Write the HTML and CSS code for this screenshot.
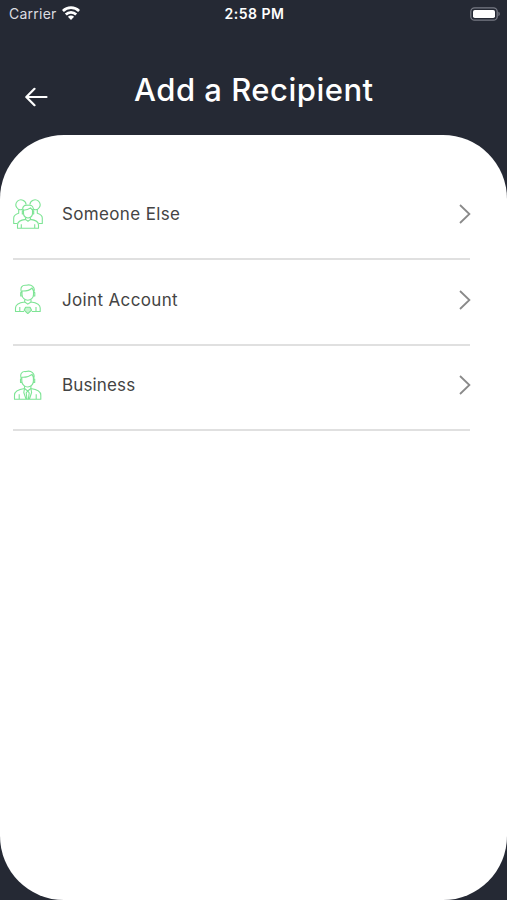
FILE: index.html
```html
<!DOCTYPE html>
<html lang="en">
<head>
    <meta charset="UTF-8">
    <meta name="viewport" content="width=device-width, initial-scale=1.0">
    <title>Add a Recipient</title>
    <link rel="stylesheet" href="styles.css">
</head>
<body>
    <div class="screen">
        <div class="status-bar">
            <div class="status-left">
                <span class="carrier">Carrier</span>
                <svg class="wifi" width="18" height="14" viewBox="0 0 18 14" fill="none" stroke="#fff" stroke-width="2.7">
                    <path d="M0.9 5C5.4 0.5 12.6 0.5 17.1 5"/>
                    <path d="M3.8 8.5C6.7 5.6 11.3 5.6 14.2 8.5"/>
                    <path d="M9 14L5.9 10.8C7.6 9.2 10.4 9.2 12.1 10.8Z" fill="#fff" stroke="none"/>
                </svg>
            </div>
            <span class="time">2:58 PM</span>
            <div class="status-right">
                <svg width="30" height="14" viewBox="0 0 30 14">
                    <rect x="0.8" y="0.8" width="26.4" height="12.4" rx="3.8" fill="none" stroke="#777a84" stroke-width="1.3"/>
                    <rect x="3" y="3" width="22" height="8" rx="1.8" fill="#fff"/>
                    <path d="M28.4 4.8C30.2 5.4 30.2 8.6 28.4 9.2Z" fill="#777a84"/>
                </svg>
            </div>
        </div>

        <header class="header">
            <svg class="back" width="24" height="20" viewBox="0 0 24 20" fill="none" stroke="#fff" stroke-width="2.2" stroke-linecap="round" stroke-linejoin="round">
                <path d="M9.5 1.8L1.3 10L9.5 18.2M1.5 10H21.5"/>
            </svg>
            <h1>Add a Recipient</h1>
        </header>

        <main class="panel">
            <ul class="options">
                <li class="option">
                    <svg class="person" viewBox="0 0 30 30">
                        <path d="M9.4 10.4C4 12 0.8 5.8 4.5 2.2C7.8-0.8 12.7 1.4 13.1 5.4M20.6 10.4C26 12 29.2 5.8 25.5 2.2C22.2-0.8 17.3 1.4 16.9 5.4"/>
                        <path d="M5.7 10.7V14.2C2.3 15.2 0.7 16.4 0.7 19V24.5H4.3M24.3 10.7V14.2C27.7 15.2 29.3 16.4 29.3 19V24.5H25.7"/>
                        <path d="M10.2 12.3C8.6 7.8 11.2 5.7 15 6.2C19.2 5.5 21.4 8.3 19.8 12.3M10.5 11.2C13.2 11.2 16 10.2 17.5 8.9L19.5 11.2"/>
                        <path d="M10.5 10.5V14.5C10.5 17.2 12.8 19 15 19C17.2 19 19.5 17.2 19.5 14.5V10.5M10.5 12H9.3V15H10.6M19.5 12H20.7V15H19.4"/>
                        <path d="M12.5 18.5V20.4L15 22.3L17.5 20.4V18.5M12.5 20.4C7 21.1 4.5 22.4 4.5 26V29.3H25.5V26C25.5 22.4 23 21.1 17.5 20.4M8.3 25.3V29.3M21.7 25.3V29.3"/>
                    </svg>
                    <span class="label">Someone Else</span>
                    <svg class="chevron" viewBox="0 0 12 20"><path d="M1 1L10.4 10L1 19"/></svg>
                </li>
                <li class="option">
                    <svg class="person" viewBox="0 0 30 30">
                        <path d="M8.6 8.5C6.8 3.8 9 0.7 13.2 1.3C18.2-0.4 23 3.3 20.6 8.5M9 7C13.4 7.2 17.2 5.8 19.1 4L20.6 7.2"/>
                        <path d="M9 6.8V10.5C9 14 12 16.3 14.8 16.3C17.7 16.3 20.5 14 20.5 10.5V6.8M9 8.5H7.7V12H9.2M20.5 8.5H21.8V12H20.3"/>
                        <path d="M11.7 15.4V18L14.8 20.1L18 18V15.4M11.7 18C5.4 18.8 2.5 20.2 2.5 24V27.5H11M18 18C24.3 18.8 27.2 20.2 27.2 24V27.5H18.8M6.8 23V27.5M23 23V27.5"/>
                        <path d="M12.6 23.2H17L18.6 26.2L14.8 29.6L11.1 26.2Z" fill="#c5f4cf"/>
                    </svg>
                    <span class="label">Joint Account</span>
                    <svg class="chevron" viewBox="0 0 12 20"><path d="M1 1L10.4 10L1 19"/></svg>
                </li>
                <li class="option">
                    <svg class="person" viewBox="0 0 30 30">
                        <path d="M8.5 8.8C6.4 4.2 8.8 1 13 1.6C18-0.2 22.8 3.7 20.5 8.8M8.8 7.2C13.2 7.5 17 6 19 4.3L20.5 7.5"/>
                        <path d="M8.8 7V11C8.8 14.6 12 17 14.7 17C17.5 17 20.4 14.6 20.4 11V7M8.8 9H7.5V12.4H9M20.4 9H21.7V12.4H20.2"/>
                        <path d="M11.5 16V18.5L14.7 21L17.9 18.5V16M11.5 18.5C5 19.5 1.5 21 1.5 25V29.3H27.8V25C27.8 21 24.4 19.5 17.9 18.5M6.2 24.3V29.3M23.2 24.3V29.3"/>
                        <path d="M11.5 18.5L10.8 22.5L13 29M17.9 18.5L18.6 22.5L16.5 29M14.7 21L13.2 22.8L14 29.2M14.7 21L16.2 22.8L15.4 29.2"/>
                    </svg>
                    <span class="label label-short">Business</span>
                    <svg class="chevron" viewBox="0 0 12 20"><path d="M1 1L10.4 10L1 19"/></svg>
                </li>
            </ul>
        </main>
    </div>
</body>
</html>
```

FILE: styles.css
```css
* {
    box-sizing: border-box;
}

body {
    margin: 0;
    background-color: #252934;
    font-family: Inter, "Liberation Sans", sans-serif;
}

.screen {
    display: flex;
    flex-direction: column;
    height: 900px;
}

.status-bar {
    display: grid;
    grid-template-columns: 1fr auto 1fr;
    align-items: center;
    height: 27px;
    padding: 0 7px 0 9px;
    color: #fff;
    font-size: 14px;
}

.status-left {
    display: flex;
    align-items: center;
    gap: 5px;
}

.carrier {
    color: #dcdde1;
    letter-spacing: 0.25px;
}

.wifi {
    margin-bottom: 2px;
}

.time {
    font-weight: 600;
    letter-spacing: 0.5px;
}

.status-right {
    display: flex;
    justify-content: flex-end;
}

.header {
    display: grid;
    grid-template-columns: 109px 1fr;
    align-items: center;
    height: 108px;
    padding: 0 25px;
}

.back {
    margin-top: 32px;
}

h1 {
    margin: 18px 0 0;
    color: #fff;
    font-size: 31px;
    font-weight: 500;
    line-height: 40px;
    letter-spacing: 0.5px;
    white-space: nowrap;
}

.panel {
    flex: 1;
    padding: 39.4px 37px 0 13px;
    background-color: #fff;
    border-radius: 64px;
}

.options {
    margin: 0;
    padding: 0;
    list-style: none;
}

.option {
    display: flex;
    align-items: center;
    height: 85.6px;
    padding-bottom: 4px;
    border-bottom: 2px solid #e0e0e0;
}

.person {
    width: 30px;
    height: 30px;
    margin-top: -1px;
    fill: none;
    stroke: #7ee495;
    stroke-width: 1.1;
    stroke-linejoin: round;
}

.label {
    flex: 1;
    margin-left: 19px;
    color: #444;
    font-size: 17px;
    letter-spacing: 0.35px;
}

.label-short {
    letter-spacing: 0.15px;
}

.chevron {
    width: 12px;
    height: 20px;
    margin-right: -1px;
    fill: none;
    stroke: #8a8a8a;
    stroke-width: 1.8;
}
```
